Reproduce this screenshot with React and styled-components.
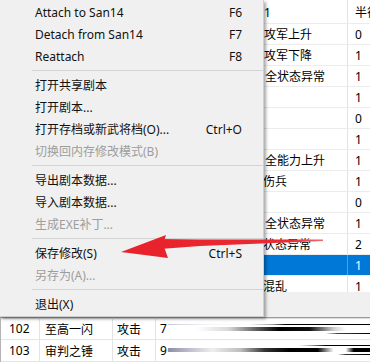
import React from 'react';
import styled, { createGlobalStyle } from 'styled-components';

const GlobalStyle = createGlobalStyle`
  html, body { margin: 0; padding: 0; }
  body {
    background: #f0f0f0;
    font-family: "Noto Sans", "Noto Sans CJK SC", sans-serif;
    font-size: 12px;
    color: #000;
  }
`;

const Screen = styled.div`
  position: relative;
  width: 370px;
  height: 362px;
  overflow: hidden;
  background: #f0f0f0;
  display: flex;
  flex-direction: column;
`;

/* ---- grid behind the menu ---- */
const Grid = styled.div`
  height: 292px;
  background: #fff;
  overflow: hidden;
  flex-shrink: 0;
`;

const GridRow = styled.div`
  display: grid;
  grid-template-columns: 348px 1fr;
  height: ${p => (p.$head ? 24 : 21)}px;
  box-sizing: border-box;
  border-bottom: 1px solid #ececec;
  background: ${p => (p.$selected ? '#0078d7' : '#fff')};
  color: ${p => (p.$selected ? '#fff' : '#000')};
`;

const EffectCell = styled.div`
  display: flex;
  align-items: center;
  padding-left: ${p => p.$indent}px;
  white-space: nowrap;
  border-right: 1px solid ${p => (p.$selected ? '#4da0e6' : '#e3e3e3')};
`;

const ValueCell = styled.div`
  display: flex;
  align-items: center;
  padding-left: 7px;
  white-space: nowrap;
`;

const Gap = styled.div`
  height: 25px;
  flex-shrink: 0;
`;

/* ---- lower list ---- */
const List = styled.div`
  flex: 1;
  background: #fff;
  border-top: 1px solid #9a9a9a;
  border-left: 1px solid #b5b5b5;
  box-shadow: inset 0 1px 1px rgba(0, 0, 0, 0.15);
`;

const ListRow = styled.div`
  display: grid;
  grid-template-columns: 39px 73px 43px 1fr;
  height: 22px;
  box-sizing: border-box;
  border-bottom: 1px solid #e6e6e6;
`;

const ListCell = styled.div`
  display: flex;
  align-items: center;
  padding-left: ${p => p.$pad || 5}px;
  border-right: ${p => (p.$last ? 'none' : '1px solid #e3e3e3')};
  white-space: nowrap;
  overflow: hidden;
`;

const Track = styled.div`
  flex: 1;
  display: flex;
  flex-direction: column;
  margin-left: 1px;
  margin-top: ${p => p.$offset}px;
`;

const TrackLine = styled.div`
  height: 1px;
  background: ${p => p.$fill};
`;

const TrackBand = styled.div`
  height: 4px;
  margin: 2px 0;
  background: ${p => p.$fill};
`;

/* ---- popup menu ---- */
const Menu = styled.div`
  position: absolute;
  left: 0;
  top: 0;
  width: 264px;
  height: 317px;
  box-sizing: border-box;
  padding-top: 1px;
  background: #f0f0f0;
  border-right: 1px solid #cfcfcf;
  border-bottom: 1px solid #cfcfcf;
  box-shadow: 2px 2px 3px rgba(0, 0, 0, 0.35);
  display: flex;
  flex-direction: column;
`;

const Item = styled.div`
  height: 22px;
  display: flex;
  align-items: center;
  justify-content: space-between;
  padding: 0 21px 0 35px;
  color: ${p => (p.$disabled ? '#9d9d9d' : '#111')};
  white-space: nowrap;
`;

const Separator = styled.div`
  height: 7px;
  display: flex;
  align-items: center;
  padding-left: 32px;

  &::after {
    content: '';
    flex: 1;
    height: 1px;
    background: #d4d4d4;
  }
`;

const Arrow = styled.svg`
  position: absolute;
  left: 0;
  top: 0;
  pointer-events: none;
`;

const gridRows = [
  { effect: '效果1', value: '半径', indent: 240, head: true },
  { effect: '攻军上升', value: '0', indent: 264 },
  { effect: '攻军下降', value: '1', indent: 264 },
  { effect: '全状态异常', value: '1', indent: 265 },
  { effect: '', value: '1', indent: 265 },
  { effect: '', value: '0', indent: 265 },
  { effect: '', value: '1', indent: 265 },
  { effect: '全能力上升', value: '1', indent: 265 },
  { effect: '伤兵', value: '1', indent: 263 },
  { effect: '', value: '0', indent: 265 },
  { effect: '全状态异常', value: '1', indent: 265 },
  { effect: '全状态异常', value: '2', indent: 251 },
  { effect: '', value: '1', indent: 265, selected: true },
  { effect: '混乱', value: '1', indent: 263 },
];

const menu = [
  { label: 'Attach to San14', key: 'F6' },
  { label: 'Detach from San14', key: 'F7' },
  { label: 'Reattach', key: 'F8' },
  'sep',
  { label: '打开共享剧本' },
  { label: '打开剧本...' },
  { label: '打开存档或新武将档(O)...', key: 'Ctrl+O' },
  { label: '切换回内存修改模式(B)', disabled: true },
  'sep',
  { label: '导出剧本数据...' },
  { label: '导入剧本数据...' },
  { label: '生成EXE补丁...', disabled: true },
  'sep',
  { label: '保存修改(S)', key: 'Ctrl+S' },
  { label: '另存为(A)...', disabled: true },
  'sep',
  { label: '退出(X)' },
];

const skills = [
  {
    id: '102', name: '至高一闪', kind: '攻击', val: '7', offset: 0,
    top: 'linear-gradient(90deg, #c9c9dc 0%, #f4f4f8 20%, #fff 40%, #9a9a9a 52%, #000 58%, #000 100%)',
    band: 'linear-gradient(90deg, #fff 0%, #fff 14%, #d8d8d8 30%, #555 45%, #000 55%, #111 70%, #cfcfcf 82%, #fff 88%, #fff 100%)',
    bottom: 'linear-gradient(90deg, #fff 0%, #fff 78%, #444 84%, #000 100%)',
  },
  {
    id: '103', name: '审判之锤', kind: '攻击', val: '9', offset: -1,
    top: 'linear-gradient(90deg, #fff 0%, #fff 65%, #888 72%, #000 78%, #000 100%)',
    band: 'linear-gradient(90deg, #8d8da6 0%, #c5c5d2 12%, #eee 22%, #bdbdbd 36%, #333 48%, #000 60%, #000 74%, #fff 82%, #fff 88%, #000 92%, #000 100%)',
    bottom: 'linear-gradient(90deg, #fff 0%, #fff 84%, #333 88%, #000 100%)',
  },
];

export default function App() {
  return (
    <>
      <GlobalStyle />
      <Screen>
        <Grid>
          {gridRows.map((r, i) => (
            <GridRow key={i} $head={r.head} $selected={r.selected}>
              <EffectCell $indent={r.indent} $selected={r.selected}>{r.effect}</EffectCell>
              <ValueCell>{r.value}</ValueCell>
            </GridRow>
          ))}
        </Grid>
        <Gap />
        <List>
          {skills.map(s => (
            <ListRow key={s.id}>
              <ListCell $pad={8}>{s.id}</ListCell>
              <ListCell>{s.name}</ListCell>
              <ListCell $pad={4}>{s.kind}</ListCell>
              <ListCell $pad={4} $last>
                {s.val}
                <Track $offset={s.offset}>
                  <TrackLine $fill={s.top} />
                  <TrackBand $fill={s.band} />
                  <TrackLine $fill={s.bottom} />
                </Track>
              </ListCell>
            </ListRow>
          ))}
        </List>

        <Menu>
          {menu.map((m, i) =>
            m === 'sep' ? (
              <Separator key={i} />
            ) : (
              <Item key={i} $disabled={m.disabled}>
                <span>{m.label}</span>
                {m.key && <span>{m.key}</span>}
              </Item>
            )
          )}
        </Menu>

        <Arrow width="370" height="362" viewBox="0 0 370 362">
          <defs>
            <linearGradient id="redFade" x1="0" x2="1" y1="0" y2="0">
              <stop offset="0" stopColor="#e8232c" />
              <stop offset="0.8" stopColor="#ea2a33" />
              <stop offset="1" stopColor="#f06a70" />
            </linearGradient>
          </defs>
          <polygon
            points="160,239 200,239.5 323,239.5 323,241 200,246 160,249"
            fill="url(#redFade)"
          />
          <polygon points="121,252 166,235 163,244 168,258" fill="#e8232c" />
        </Arrow>
      </Screen>
    </>
  );
}
